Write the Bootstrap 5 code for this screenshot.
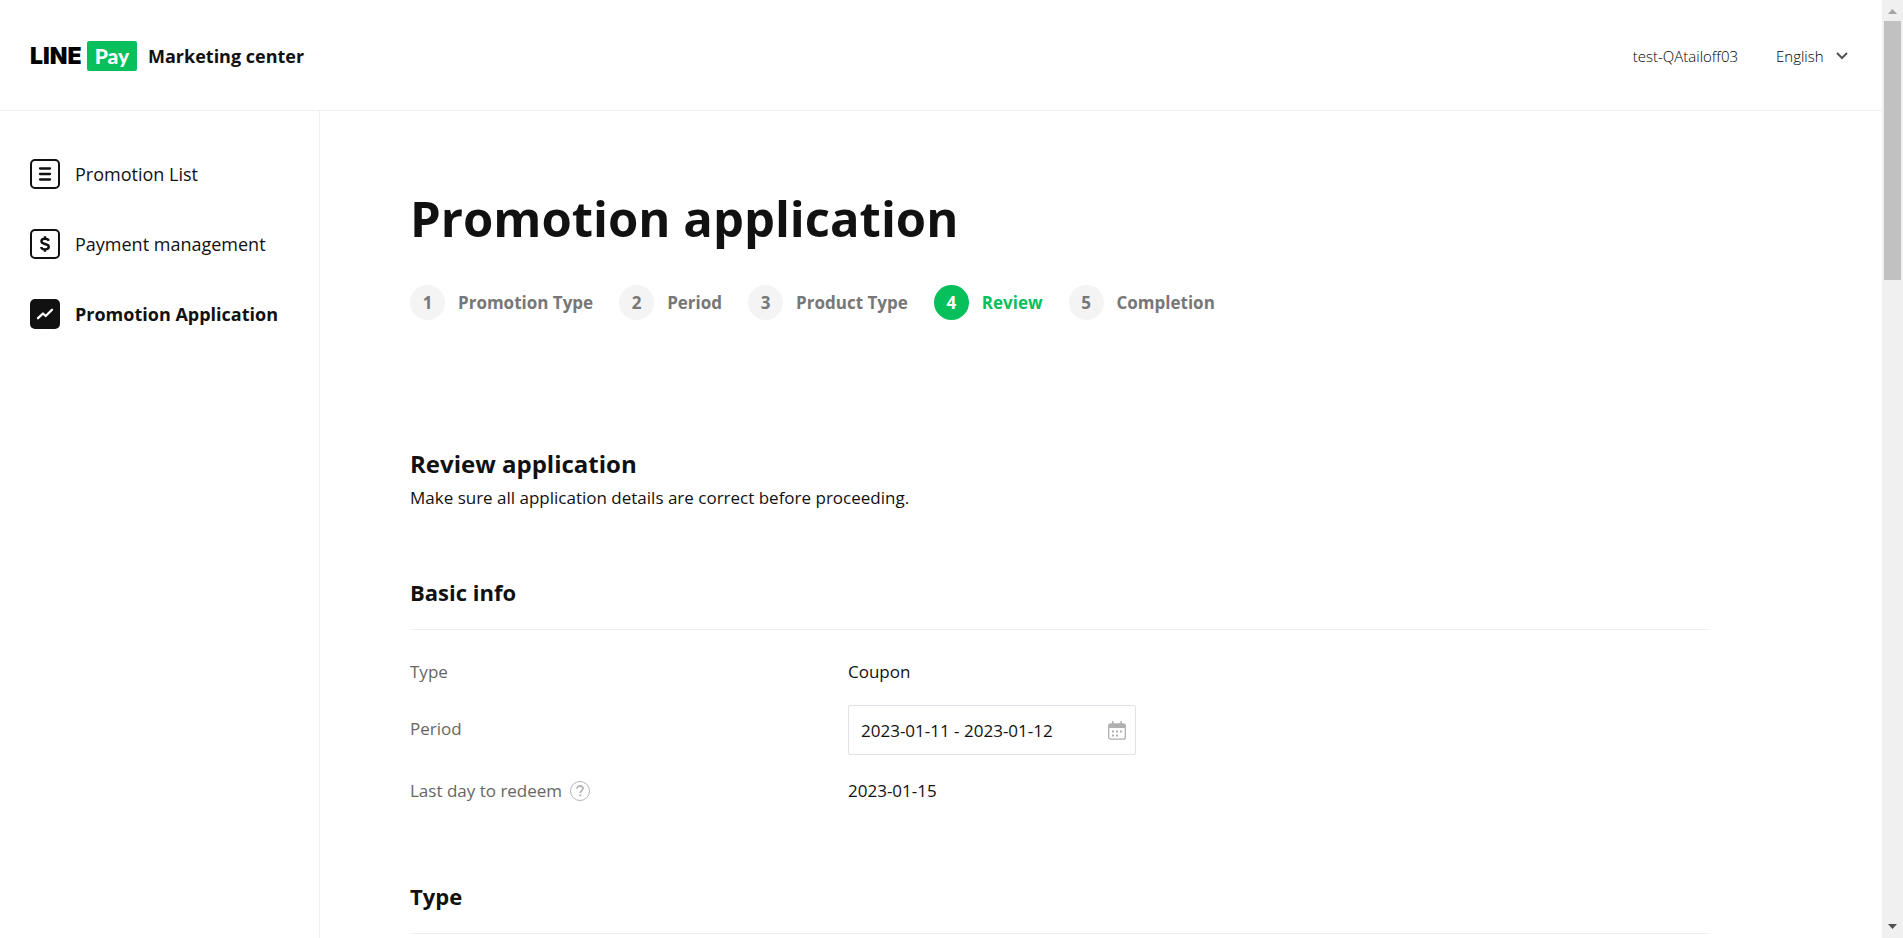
<!DOCTYPE html>
<html lang="en">
<head>
<meta charset="utf-8">
<meta name="viewport" content="width=device-width, initial-scale=1">
<title>LINE Pay Marketing center</title>
<link rel="stylesheet" href="https://cdn.jsdelivr.net/npm/bootstrap@5.3.0/dist/css/bootstrap.min.css">
<style>
  :root { --ink: #111; --line: #efefef; --brand: #07bf5b; --muted: #777; }
  body { font-family: "Open Sans", "Noto Sans", sans-serif; font-size: 17px; line-height: 24px; color: var(--ink); background: #fff; }
  a { color: inherit; text-decoration: none; }
  .top-bar { height: 111px; border-bottom: 1px solid var(--line); padding: 2px 34px 0 30px; }
  .logo-line { font: 900 23px/30px Inter, sans-serif; color: #000; width: 57px; }
  .logo-pay { font: 900 21px/30px Lato, sans-serif; color: #fff; background: var(--brand); border-radius: 2px; width: 50px; height: 30px; }
  .logo-name { font-size: 18px; font-weight: 700; margin-left: 11px; }
  .account { font-size: 15px; font-weight: 300; gap: 38px; color: #000; }
  .lang-select { appearance: none; border: 0; padding: 0; background: none; color: #000; width: 52px; font-weight: 300; }
  .side-bar { width: 320px; border-right: 1px solid var(--line); padding: 48px 30px; }
  .side-bar a { font-size: 18px; height: 30px; gap: 15px; }
  .side-bar ul { gap: 40px; }
  .content-area { padding: 71px 90px 0; }
  .content-inner { max-width: 1300px; }
  .page-title { font-size: 49px; line-height: 72px; font-weight: 700; margin-bottom: 31px; }
  .steps { gap: 26px; margin-bottom: 126px; color: var(--muted); font-weight: 700; }
  .steps li { gap: 13px; }
  .step-no { width: 35px; height: 35px; background: #f4f4f4; }
  .steps .current { color: var(--brand); }
  .steps .current .step-no { background: var(--brand); color: #fff; }
  .review-title { font-size: 24px; line-height: 36px; font-weight: 700; margin: 0; }
  .section-title { font-size: 22px; line-height: 36px; font-weight: 700; padding-bottom: 19px; border-bottom: 1px solid var(--line); margin: 0; }
  .review-note { margin: 4px 0 64px; }
  .details { grid-template-columns: 438px 1fr; margin: 30px 0 75px; }
  .details > * { margin: 0; font-weight: 400; }
  .details dt { color: #666; }
  .period-box { width: 288px; height: 50px; border: 1px solid #e1e1ea; border-radius: 2px; padding: 0 9px 0 12px; margin: 21px 0 24px; }
  .period-box input { border: 0; outline: 0; min-width: 0; color: var(--ink); padding: 2px 0 0; background: none; }
  .period-label { margin-top: 33px; }
  .redeem-label { gap: 7px; }
  .scroll-track { width: 21px; background: #f0f0f0; padding: 9px 2px; }
  .scroll-thumb { height: 259px; background: #c1c1c1; margin-top: 7px; }
</style>
</head>
<body class="vh-100 d-flex overflow-hidden">
<div class="flex-grow-1 d-flex flex-column overflow-hidden">
  <header class="top-bar d-flex align-items-center justify-content-between flex-shrink-0">
    <a href="#" class="d-flex align-items-center">
      <span class="logo-line">LINE</span>
      <span class="logo-pay text-center">Pay</span>
      <span class="logo-name">Marketing center</span>
    </a>
    <div class="account d-flex align-items-center">
      <span>test-QAtailoff03</span>
      <div class="d-flex align-items-center gap-2">
        <select class="lang-select" aria-label="Language"><option>English</option></select>
        <svg width="12" height="8" viewBox="0 0 12 8" fill="none" stroke="#555" stroke-width="2"><path d="M1 1l5 5 5-5"/></svg>
      </div>
    </div>
  </header>
  <div class="d-flex flex-grow-1 overflow-hidden">
    <nav class="side-bar flex-shrink-0">
      <ul class="list-unstyled d-flex flex-column m-0">
        <li><a href="#" class="d-flex align-items-center">
          <svg width="30" height="30" viewBox="0 0 30 30" fill="none" stroke="#111" stroke-width="2" stroke-linecap="round"><rect x="1" y="1" width="28" height="28" rx="4"/><path d="M10 9.500h10M10 15h10M10 20.500h10" stroke-width="2.300"/></svg>
          Promotion List</a></li>
        <li><a href="#" class="d-flex align-items-center">
          <svg width="30" height="30" viewBox="0 0 30 30" fill="none" stroke="#111" stroke-width="2"><rect x="1" y="1" width="28" height="28" rx="4"/><path stroke-width="2.400" d="M18.800 11.800C18.200 10.300 16.800 9.700 15 9.700c-2.200 0-3.600 1-3.600 2.600 0 1.700 1.400 2.200 3.600 2.700s3.800 1 3.800 2.800c0 1.600-1.500 2.600-3.700 2.600-2 0-3.600-.8-4-2.500M15 7.300v3M15 19.800v3"/></svg>
          Payment management</a></li>
        <li><a href="#" class="d-flex align-items-center fw-bold" aria-current="page">
          <svg width="30" height="30" viewBox="0 0 30 30" fill="none"><rect width="30" height="30" rx="5" fill="#111"/><path d="M8 19.200l5-4.700 2.700 2.500L22 10.800" stroke="#fff" stroke-width="2.300" stroke-linecap="round" stroke-linejoin="round"/></svg>
          Promotion Application</a></li>
      </ul>
    </nav>
    <main class="content-area flex-grow-1 overflow-hidden">
      <div class="content-inner">
        <h1 class="page-title">Promotion application</h1>
        <ol class="steps list-unstyled d-flex">
          <li class="d-flex align-items-center"><span class="step-no rounded-circle d-flex align-items-center justify-content-center">1</span>Promotion Type</li>
          <li class="d-flex align-items-center"><span class="step-no rounded-circle d-flex align-items-center justify-content-center">2</span>Period</li>
          <li class="d-flex align-items-center"><span class="step-no rounded-circle d-flex align-items-center justify-content-center">3</span>Product Type</li>
          <li class="current d-flex align-items-center" aria-current="step"><span class="step-no rounded-circle d-flex align-items-center justify-content-center">4</span>Review</li>
          <li class="d-flex align-items-center"><span class="step-no rounded-circle d-flex align-items-center justify-content-center">5</span>Completion</li>
        </ol>
        <h2 class="review-title">Review application</h2>
        <p class="review-note">Make sure all application details are correct before proceeding.</p>
        <h3 class="section-title">Basic info</h3>
        <dl class="details d-grid">
          <dt>Type</dt>
          <dd>Coupon</dd>
          <dt><label for="period" class="period-label">Period</label></dt>
          <dd>
            <div class="period-box d-flex align-items-center">
              <input id="period" class="flex-grow-1" type="text" value="2023-01-11 - 2023-01-12">
              <svg width="18" height="19" viewBox="0 0 18 19" fill="none"><rect x=".7" y="3" width="16.600" height="15.200" rx="2" stroke="#b0b0b0" stroke-width="1.300"/><path d="M4 0h1.500v3H4zM12.500 0H14v3h-1.500zM1 3h16v4H1z" fill="#b0b0b0"/><path d="M4 9.500h2v2H4zM8 9.500h2v2H8zM12 9.500h2v2h-2zM4 13.500h2v2H4zM8 13.500h2v2H8z" fill="#b0b0b0"/></svg>
            </div>
          </dd>
          <dt class="redeem-label d-flex align-items-center">Last day to redeem
            <svg width="22" height="22" viewBox="0 0 22 22" fill="none" stroke="#b5b5b5"><circle cx="11" cy="11" r="9.500"/><path d="M8 8.800c0-1.900 1.300-2.800 3-2.800s3 1 3 2.600c0 2-2.700 2-2.700 4.400" stroke-width="1.800"/><path d="M11.300 14.500v1.800" stroke-width="2"/></svg></dt>
          <dd>2023-01-15</dd>
        </dl>
        <h3 class="section-title">Type</h3>
      </div>
    </main>
  </div>
</div>
<div class="scroll-track flex-shrink-0 d-flex flex-column" aria-hidden="true">
  <svg class="mx-auto flex-shrink-0" width="9" height="5" viewBox="0 0 9 5"><path d="M0 5L4.500 0 9 5z" fill="#a3a3a3"/></svg>
  <div class="scroll-thumb"></div>
  <svg class="mx-auto mt-auto flex-shrink-0" width="9" height="5" viewBox="0 0 9 5"><path d="M0 0h9L4.500 5z" fill="#505050"/></svg>
</div>
<script src="https://cdn.jsdelivr.net/npm/bootstrap@5.3.0/dist/js/bootstrap.bundle.min.js"></script>
</body>
</html>
